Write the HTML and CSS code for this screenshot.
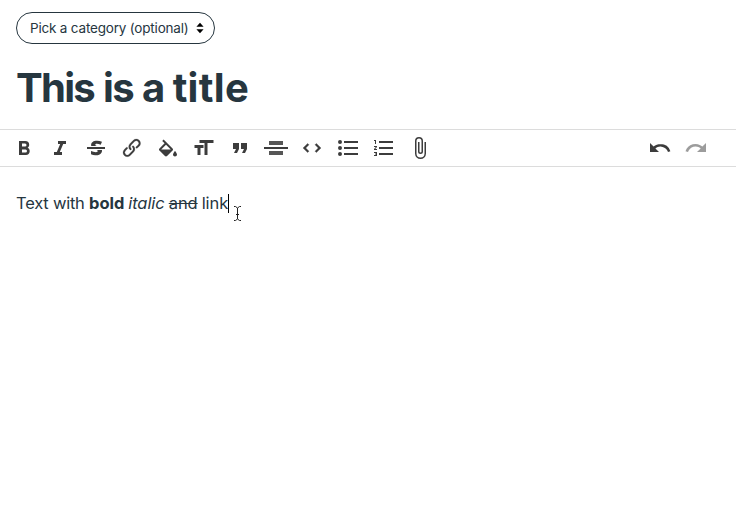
FILE: index.html
```html
<!DOCTYPE html>
<html lang="en">
<head>
<meta charset="utf-8">
<title>Editor</title>
<link rel="stylesheet" href="styles.css">
</head>
<body>
<main class="editor">
  <button class="category"><span class="category-label">Pick a category (optional)</span><svg class="arrows" viewBox="0 0 8 12"><path d="M4 .8 7.6 4.8H.4zM4 11.2.4 7.2h7.2z"/></svg></button>
  <h1 class="title"><span class="tight">This is a </span><span class="loose">title</span></h1>
  <div class="toolbar">
    <svg viewBox="0 0 24 24"><path d="M15.6 11.8c1-.7 1.6-1.8 1.6-2.8a4 4 0 0 0-4-4H7v14h7c2.1 0 3.7-1.7 3.7-3.8 0-1.5-.8-2.8-2.1-3.4zM10 7.5h3a1.5 1.5 0 1 1 0 3h-3v-3zm3.5 9H10v-3h3.5a1.5 1.5 0 1 1 0 3z"/></svg>
    <svg viewBox="0 0 24 24"><path d="M10 5v3h2.2l-3.4 8H6v3h8v-3h-2.2l3.4-8H18V5h-8z"/></svg>
    <svg viewBox="0 0 24 24"><path d="M12.73 14l.28.14c.26.15.45.3.57.44.12.14.18.3.18.5 0 .3-.15.56-.44.75-.3.2-.76.3-1.39.3A13.52 13.52 0 0 1 7 14.95v3.37a10.64 10.64 0 0 0 4.84.88c1.26 0 2.35-.19 3.28-.56.93-.37 1.64-.9 2.14-1.57s.74-1.45.74-2.32c0-.26-.02-.51-.06-.75h-5.21zm-5.5-4c-.08-.34-.12-.7-.12-1.1 0-1.29.52-2.3 1.58-3.02 1.05-.72 2.5-1.08 4.34-1.08 1.62 0 3.28.34 4.97 1l-1.3 2.93c-1.47-.6-2.73-.9-3.8-.9-.55 0-.96.08-1.2.26-.26.17-.38.38-.38.64 0 .27.16.52.48.74.17.12.53.3 1.05.53H7.23zM3 13h18v-2H3v2z"/></svg>
    <svg class="link" viewBox="0 0 24 24"><path d="M9.88 13.7a4.3 4.3 0 0 1 0-6.07l3.37-3.37a4.26 4.26 0 0 1 6.07 0 4.3 4.3 0 0 1 0 6.06l-1.96 1.72a.91.91 0 1 1-1.3-1.3l1.97-1.71a2.46 2.46 0 0 0-3.48-3.48l-3.38 3.37a2.46 2.46 0 0 0 0 3.48.91.91 0 1 1-1.3 1.3z"/><path d="M4.25 19.46a4.3 4.3 0 0 1 0-6.07l1.93-1.9a.91.91 0 1 1 1.3 1.3l-1.93 1.9a2.46 2.46 0 0 0 3.48 3.48l3.37-3.38c.96-.96.96-2.52 0-3.48a.91.91 0 1 1 1.3-1.3 4.3 4.3 0 0 1 0 6.07l-3.38 3.38a4.26 4.26 0 0 1-6.07 0z"/></svg>
    <svg viewBox="0 -3.5 24 24"><path d="M16.56 8.94L7.62 0 6.21 1.41l2.38 2.38-5.15 5.15c-.59.59-.59 1.54 0 2.12l5.5 5.5c.29.29.68.44 1.06.44s.77-.15 1.06-.44l5.5-5.5c.59-.58.59-1.53 0-2.12zM5.21 10L10 5.21 14.79 10H5.21zM19 11.5s-2 2.17-2 3.5c0 1.1.9 2 2 2s2-.9 2-2c0-1.33-2-3.5-2-3.5z"/></svg>
    <svg viewBox="0.5 0 24 24"><path d="M12 9v3H9v7H6v-7H3V9h9zM8 4h14v3h-6v12h-3V7H8V4z"/></svg>
    <svg viewBox="0 0 24 24"><path d="M6 17h3l2-4V7H5v6h3zm8 0h3l2-4V7h-6v6h3z"/></svg>
    <svg viewBox="0 0 24 24"><path d="M0 11h24v2H0z"/><path class="bars" d="M5 5h14v4H5zM5 15h14v4H5z"/></svg>
    <svg class="code" viewBox="0 0 24 24"><path d="M18.2 12L15 15.2l1.4 1.4L21 12l-4.6-4.6L15 8.8l3.2 3.2zM5.8 12L9 8.8 7.6 7.4 3 12l4.6 4.6L9 15.2 5.8 12z"/></svg>
    <svg viewBox="0 0 24 24"><path d="M4 4a2 2 0 1 0 0 4 2 2 0 0 0 0-4zm0 6a2 2 0 1 0 0 4 2 2 0 0 0 0-4zm0 6a2 2 0 1 0 0 4 2 2 0 0 0 0-4zm4 3h14v-2H8v2zm0-6h14v-2H8v2zm0-8v2h14V5H8z"/></svg>
    <svg viewBox="0 0 24 24"><path d="M2 17h2v.5H3v1h1v.5H2v1h3v-4H2v1zm1-9h1V4H2v1h1v3zm-1 3h1.8L2 13.1v.9h3v-1H3.2L5 10.9V10H2v1zm5-6v2h14V5H7zm0 14h14v-2H7v2zm0-6h14v-2H7v2z"/></svg>
    <svg viewBox="0 0 24 24"><path d="M16.5 6v11.5a4 4 0 1 1-8 0V5a2.5 2.5 0 0 1 5 0v10.5a1 1 0 1 1-2 0V6H10v9.5a2.5 2.5 0 0 0 5 0V5a4 4 0 1 0-8 0v12.5a5.5 5.5 0 0 0 11 0V6h-1.5z"/></svg>
    <svg class="undo" viewBox="0 0 24 24"><path d="M12.5 8c-2.6 0-5 1-6.9 2.6L2 7v9h9l-3.6-3.6A8 8 0 0 1 20 16l2.4-.8a10.5 10.5 0 0 0-10-7.2z"/></svg>
    <svg class="disabled" viewBox="0 0 24 24"><path d="M18.4 10.6a10.5 10.5 0 0 0-16.9 4.6L4 16a8 8 0 0 1 12.7-3.6L13 16h9V7l-3.6 3.6z"/></svg>
  </div>
  <div class="content"><span class="plain">Text with </span><strong>bold</strong> <em>italic</em> <del>and</del> <span>link</span><span class="caret"></span><svg class="cursor" viewBox="0 0 9 17"><path d="M1 1.5h1.5l2 1.5 2-1.5H8M4.5 3v11M1 15.5h1.5l2-1.5 2 1.5H8M3 9.5h3"/></svg></div>
</main>
</body>
</html>
```
FILE: styles.css
```css
* { box-sizing: border-box; }
body { margin: 0; background: #fff; color: #26363f; font-family: Inter, "Liberation Sans", sans-serif; }
.editor { display: flex; flex-direction: column; align-items: flex-start; padding-top: 12px; height: 508px; }
.category { display: flex; align-items: center; justify-content: space-between; width: 199px; height: 32px; margin-left: 16px; padding: 0 10px 0 13px; border: 1px solid #26363f; border-radius: 16px; background: #fff; color: inherit; font: 13.5px Inter, sans-serif; white-space: nowrap; }
.category-label { letter-spacing: -0.19px; }
.arrows { width: 8px; height: 12px; fill: #000; }
.title { margin: 20px 0 0 16px; height: 48px; font-size: 40px; line-height: 48px; font-weight: 700; white-space: nowrap; }
.tight { letter-spacing: -1.7px; word-spacing: 1.3px; }
.loose { letter-spacing: 0.3px; }
.toolbar { display: flex; align-items: center; gap: 12px; width: 100%; height: 38px; margin-top: 17px; padding: 0 28px 0 12px; border-top: 1px solid #dcdcdc; border-bottom: 1px solid #dcdcdc; }
.toolbar svg { width: 24px; height: 24px; flex: none; fill: #3c3c3c; }
.toolbar .link { stroke: #3c3c3c; stroke-width: .2; }
.toolbar .code { stroke: #3c3c3c; stroke-width: .3; }
.toolbar .bars { fill: #565656; }
.toolbar .undo { margin-left: auto; }
.toolbar .disabled { opacity: .5; }
.content { display: flex; align-items: center; position: relative; height: 24px; margin: 24px 0 0 16px; font-size: 16.5px; line-height: 24px; white-space: pre; letter-spacing: -0.06px; }
.content .plain { letter-spacing: -0.22px; }
.content strong { margin-right: 4px; }
.content em { margin-right: 4px; }
.content del { margin-right: 4px; text-decoration-thickness: 1px; }
.caret { width: 1px; height: 19px; background: #000; }
.cursor { position: absolute; left: 217px; top: 14px; width: 9px; height: 17px; fill: none; stroke: #222; stroke-width: 1; }
```
